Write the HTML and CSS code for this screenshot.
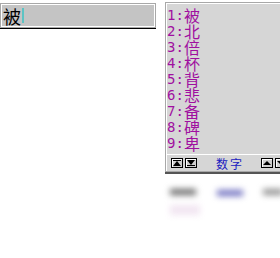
FILE: index.html
```html
<!DOCTYPE html>
<html>
<head>
<meta charset="utf-8">
<link rel="stylesheet" href="styles.css">
</head>
<body>
<div class="page">
  <div class="input">
    <span class="typed">被</span><span class="caret"></span>
  </div>
  <div class="side">
    <div class="cand">
      <div class="list">
        <div class="row"><span class="n">1:</span>被</div>
        <div class="row"><span class="n">2:</span>北</div>
        <div class="row"><span class="n">3:</span>倍</div>
        <div class="row"><span class="n">4:</span>杯</div>
        <div class="row"><span class="n">5:</span>背</div>
        <div class="row"><span class="n">6:</span>悲</div>
        <div class="row"><span class="n">7:</span>备</div>
        <div class="row"><span class="n">8:</span>碑</div>
        <div class="row"><span class="n">9:</span>卑</div>
      </div>
      <div class="bar">
        <span class="btn"><svg width="10" height="8" viewBox="0 0 10 8"><rect x="1" y="1" width="8" height="1" fill="#000"/><path d="M5 2 L9 7 L1 7 Z" fill="#000"/></svg></span>
        <span class="btn"><svg width="10" height="8" viewBox="0 0 10 8"><path d="M1 1 L9 1 L5 6 Z" fill="#000"/><rect x="1" y="6" width="8" height="1" fill="#000"/></svg></span>
        <span class="mode">数字</span>
        <span class="btn"><svg width="10" height="8" viewBox="0 0 10 8"><path d="M5 2 L9 6 L1 6 Z" fill="#000"/></svg></span>
        <span class="btn"><svg width="10" height="8" viewBox="0 0 10 8"><path d="M1 2 L9 2 L5 6 Z" fill="#000"/></svg></span>
      </div>
    </div>
    <div class="ghost">
      <div class="g1"></div><div class="g2"></div><div class="g3"></div>
      <div class="g4"></div>
    </div>
  </div>
</div>
</body>
</html>
```
FILE: styles.css
```css
html, body { margin: 0; padding: 0; background: #fff; }
body { width: 280px; height: 258px; overflow: hidden; }
.page { display: flex; align-items: flex-start; width: 280px; overflow: hidden; }
.input {
  flex: none;
  margin-top: 3px;
  width: 152px; height: 23px;
  background: #c4c4c4;
  border: 1px solid #a8a8a8;
  box-shadow: inset 0 0 0 1px #fff, 0 1px 0 #000;
  display: flex; align-items: center;
  padding-left: 2px;
}
.typed { font-family: "Noto Sans CJK SC", sans-serif; font-size: 18px; line-height: 18px; color: #000; }
.caret { width: 2px; height: 15px; background: #5cc4c4; margin-left: 1px; }
.side { margin-left: 9px; margin-top: 2px; display: flex; flex-direction: column; width: 130px; flex: none; }
.cand {
  background: #d6d6d6;
  border: 1px solid #a8a8a8;
  box-shadow: inset 1px 1px 0 #fff, 0 2px 0 #555;
  padding: 4px 0 0 1px;
}
.row {
  height: 16px; line-height: 16px;
  color: #a010a0;
  font-family: "Noto Sans CJK SC", sans-serif; font-size: 16px;
  display: flex; align-items: center;
}
.n { font-family: "DejaVu Sans Mono", monospace; font-size: 14px; width: 17px; flex: none; }
.bar {
  margin-top: 3px;
  height: 16px;
  display: flex; align-items: center;
  border-top: 1px solid #fff;
  padding-left: 4px;
}
.btn {
  width: 10px; height: 8px;
  border: 1px solid #000;
  background: #d0d0d0;
  box-shadow: inset 1px 1px 0 #fff;
  display: flex; margin-right: 2px; flex: none;
}
.btn svg { display: block; }
.mode { font-family: "Noto Sans CJK SC", sans-serif; font-size: 12px; color: #2020c0; margin: 0 17px 0 17px; letter-spacing: 2px; }
.ghost { position: relative; height: 60px; filter: blur(3px); }
.g1, .g2, .g3, .g4 { position: absolute; height: 6px; }
.g1 { left: 5px; top: 17px; width: 26px; background: #6a6a6a; }
.g2 { left: 52px; top: 18px; width: 26px; background: #7070c0; }
.g3 { left: 98px; top: 17px; width: 20px; background: #909090; }
.g4 { left: 5px; top: 33px; width: 30px; height: 10px; background: #f2e6f2; }
```
